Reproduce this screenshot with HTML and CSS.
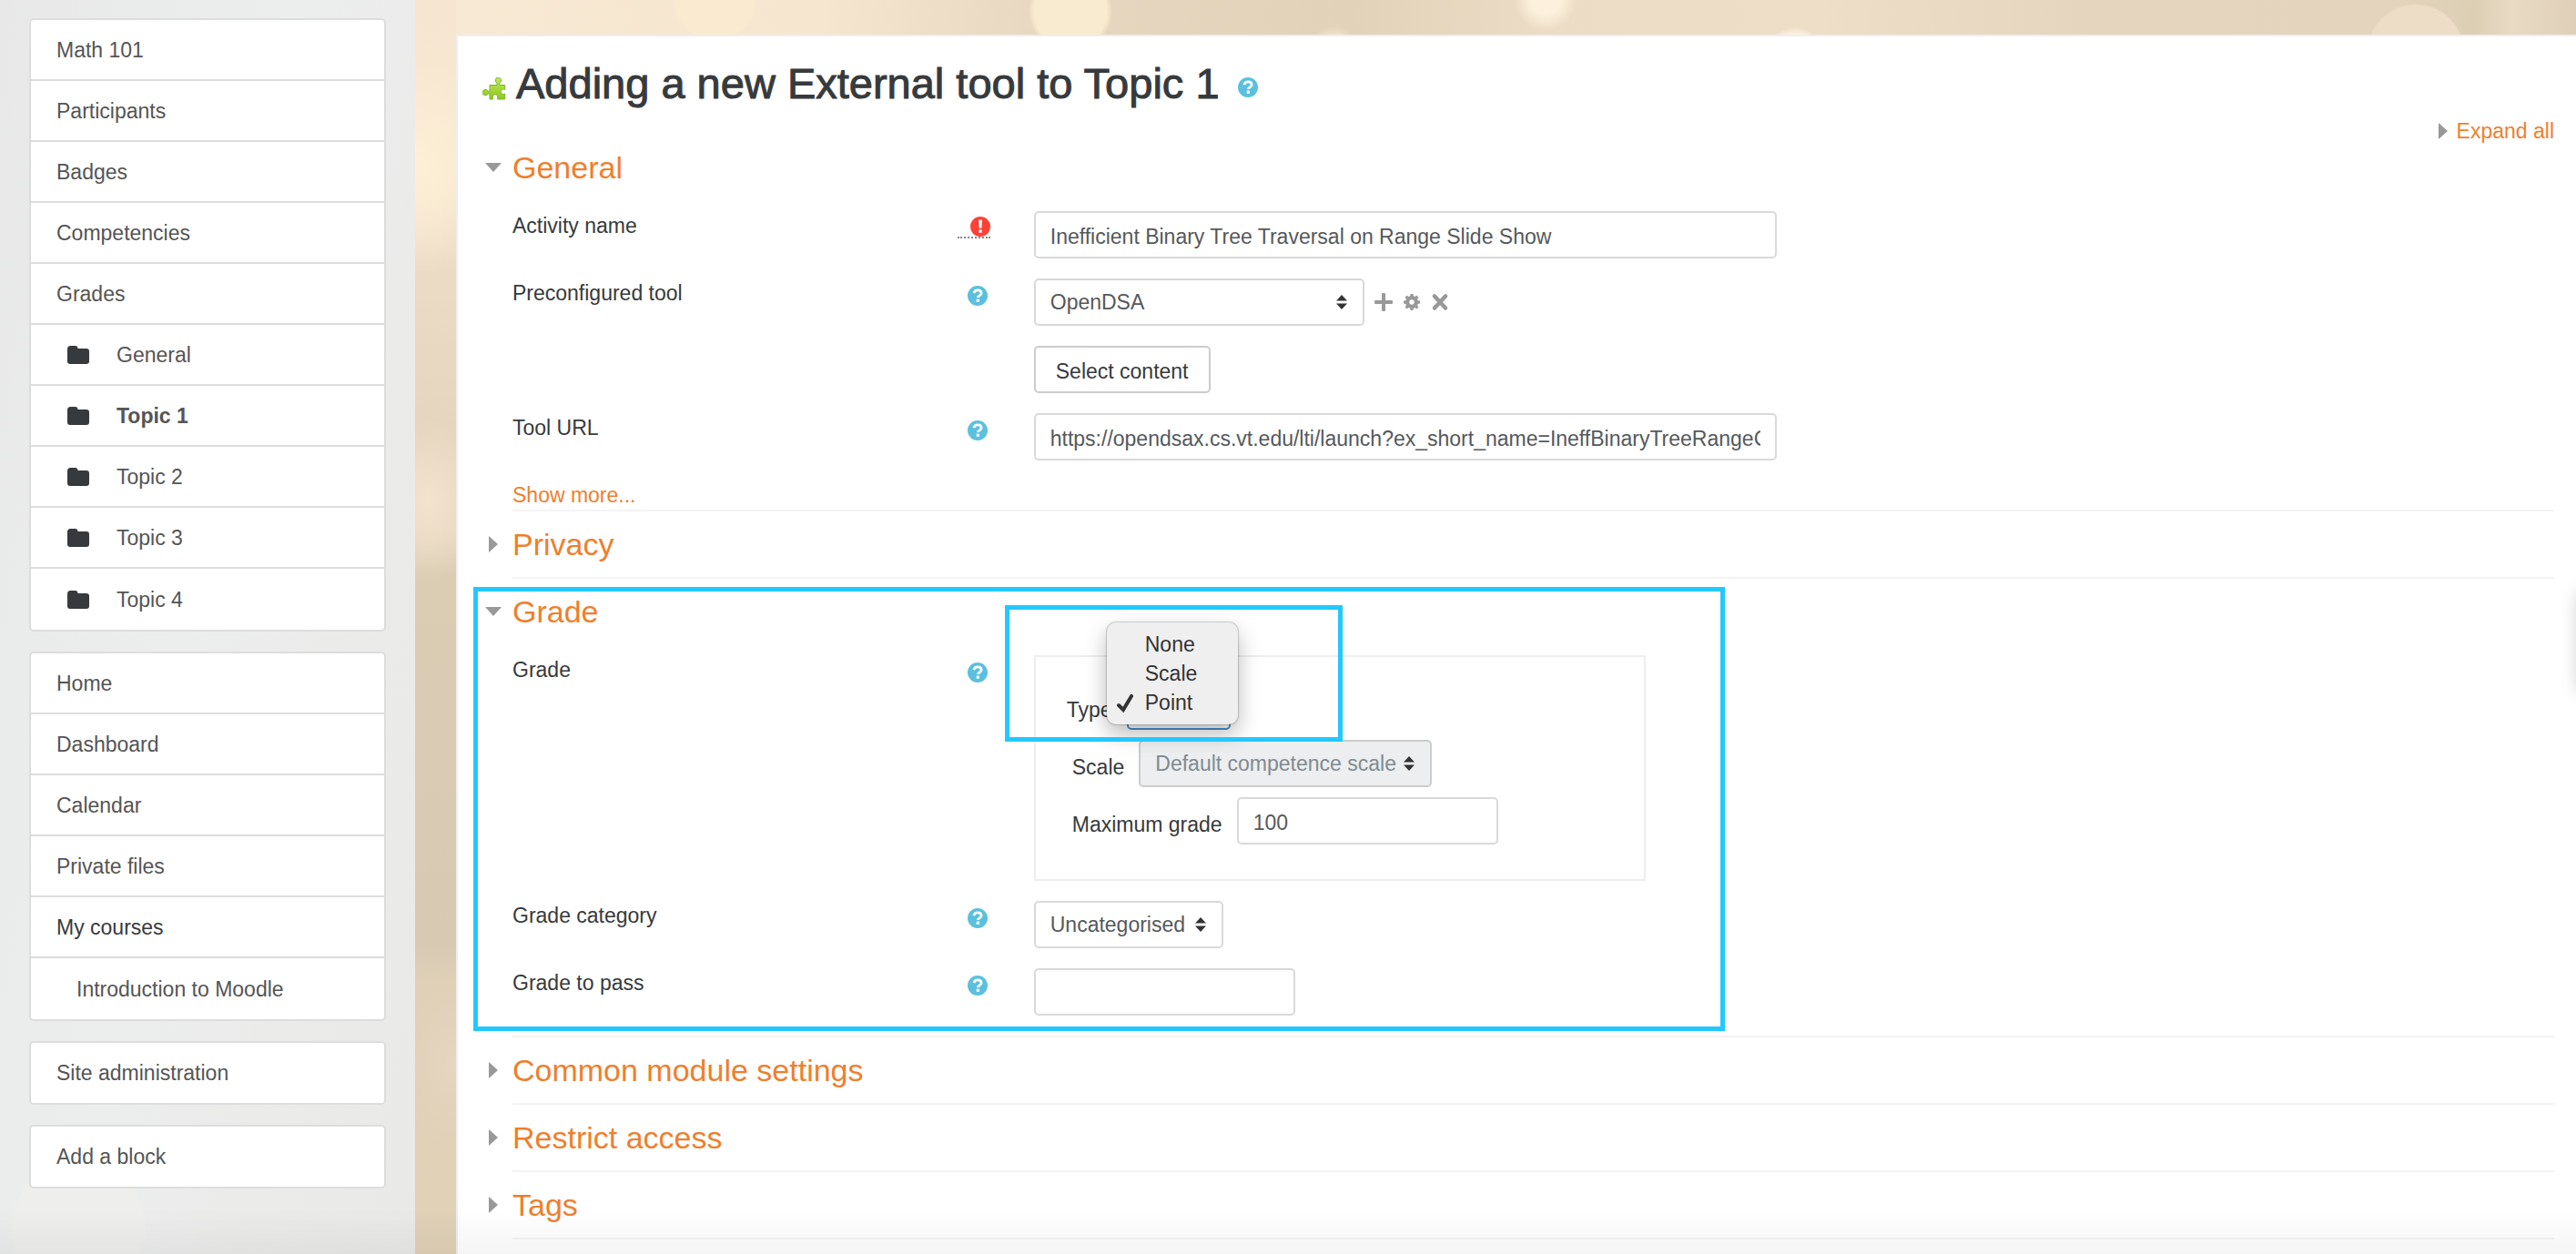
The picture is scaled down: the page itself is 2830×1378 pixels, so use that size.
FILE: index.html
```html
<!DOCTYPE html>
<html lang="en">
<head>
<meta charset="utf-8">
<title>Adding a new External tool to Topic 1</title>
<link rel="stylesheet" href="styles.css">
</head>
<body>
<svg class="sprite" aria-hidden="true">
  <symbol id="folder" viewBox="0 0 24 20"><path d="M3.500 0h5a3 3 0 0 1 3 3h9.500a3 3 0 0 1 3 3v11a3 3 0 0 1-3 3H3a3 3 0 0 1-3-3V3.500A3.500 3.500 0 0 1 3.500 0z"/></symbol>
  <symbol id="help" viewBox="0 0 22 22"><circle cx="11" cy="11" r="11"/><path d="M6.800 8.200C7.500 5.800 9 4.900 11.200 4.900c2.300 0 3.900 1.400 3.900 3.300 0 2.700-3.700 2.700-3.700 4.900" fill="none" stroke="#fff" stroke-width="2.800"/><path d="M9.700 14.600h3.300v3.200H9.700z" fill="#fff"/></symbol>
  <symbol id="required" viewBox="0 0 22 22"><circle cx="11" cy="11" r="11"/><path d="M9.200 3.600h3.600l-.4 9.200H9.600zM9.400 14.600h3.200v3.200H9.400z" fill="#fff"/></symbol>
  <symbol id="down" viewBox="0 0 18 10"><path d="M0 0h18L9 10z"/></symbol>
  <symbol id="right" viewBox="0 0 10 18"><path d="M0 0l10 9-10 9z"/></symbol>
  <symbol id="updown" viewBox="0 0 12 16"><path d="M6 0l6 6.500H0zM6 16l6-6.500H0z"/></symbol>
</svg>
<div class="page">
  <nav class="drawer" aria-label="Navigation">
    <ul class="nav-list nav-course">
      <li><a href="#">Math 101</a></li>
      <li><a href="#">Participants</a></li>
      <li><a href="#">Badges</a></li>
      <li><a href="#">Competencies</a></li>
      <li><a href="#">Grades</a></li>
      <li class="topic"><a href="#"><svg class="folder"><use href="#folder"/></svg>General</a></li>
      <li class="topic current"><a href="#"><svg class="folder"><use href="#folder"/></svg>Topic 1</a></li>
      <li class="topic"><a href="#"><svg class="folder"><use href="#folder"/></svg>Topic 2</a></li>
      <li class="topic"><a href="#"><svg class="folder"><use href="#folder"/></svg>Topic 3</a></li>
      <li class="topic"><a href="#"><svg class="folder"><use href="#folder"/></svg>Topic 4</a></li>
    </ul>
    <ul class="nav-list">
      <li><a href="#">Home</a></li>
      <li><a href="#">Dashboard</a></li>
      <li><a href="#">Calendar</a></li>
      <li><a href="#">Private files</a></li>
      <li class="plain"><span>My courses</span></li>
      <li class="nested"><a href="#">Introduction to Moodle</a></li>
    </ul>
    <ul class="nav-list">
      <li><a href="#">Site administration</a></li>
    </ul>
    <ul class="nav-list">
      <li><a href="#">Add a block</a></li>
    </ul>
  </nav>

  <div class="content">
    <main class="card">
      <header class="title">
        <svg class="puzzle" viewBox="0 0 26 26">
          <defs><linearGradient id="leaf" x1="0" y1="0" x2="0" y2="1"><stop offset="0" stop-color="#c3e85a"/><stop offset="1" stop-color="#8cc81e"/></linearGradient></defs>
          <path d="M8 8.500H16V6.200A3.200 3.200 0 1 1 18.800 6.200V8.500H24.700V13.500A2.800 2.800 0 1 0 24.700 18V24H16.500V22.500A2.700 2.700 0 1 0 11.500 22.500V24H8V18H6.200A3.200 3.200 0 1 1 6.200 15.200H8Z" fill="url(#leaf)" stroke="#7db52f"/>
        </svg>
        <h1>Adding a new External tool to Topic 1</h1>
        <svg class="icon help"><use href="#help"/></svg>
      </header>

      <form>
        <a class="expand" href="#"><svg class="caret side"><use href="#right"/></svg>Expand all</a>

        <section class="group">
          <h2><svg class="caret"><use href="#down"/></svg><a href="#">General</a></h2>
          <div class="rows">
            <div class="row">
              <div class="label"><label for="name">Activity name</label><span class="req"><svg class="icon required"><use href="#required"/></svg></span></div>
              <div class="field"><input class="box wide" id="name" type="text" value="Inefficient Binary Tree Traversal on Range Slide Show"></div>
            </div>
            <div class="row">
              <div class="label"><label for="tool">Preconfigured tool</label><svg class="icon help"><use href="#help"/></svg></div>
              <div class="field">
                <span class="select tool"><select class="box" id="tool"><option>OpenDSA</option></select><svg class="arrows"><use href="#updown"/></svg></span>
                <span class="actions">
                  <svg viewBox="0 0 20 20"><path d="M9 0h2q1 0 1 1v7h7q1 0 1 1v2q0 1-1 1h-7v7q0 1-1 1H9q-1 0-1-1v-7H1q-1 0-1-1V9q0-1 1-1h7V1q0-1 1-1z"/></svg>
                  <svg viewBox="0 0 20 20"><path fill-rule="evenodd" d="M8.600 1h2.800l.5 2.300 1.500.6 2-1.200 2 2-1.300 2 .6 1.500 2.300.4v2.800l-2.300.5-.6 1.500 1.300 2-2 2-2-1.300-1.500.6-.5 2.300H8.600l-.5-2.300-1.500-.6-2 1.300-2-2 1.300-2-.6-1.500L1 11.400V8.600l2.300-.4.600-1.500-1.300-2 2-2 2 1.200 1.500-.6zM10 7.300a2.700 2.700 0 1 0 0 5.400 2.700 2.700 0 0 0 0-5.400z"/></svg>
                  <svg viewBox="0 0 20 20"><path d="M4 3.500l12 13M16 3.500l-12 13" fill="none" stroke="currentColor" stroke-width="4.500" stroke-linecap="round"/></svg>
                </span>
              </div>
            </div>
            <div class="row">
              <div class="label"></div>
              <div class="field"><button class="box" type="button">Select content</button></div>
            </div>
            <div class="row">
              <div class="label"><label for="url">Tool URL</label><svg class="icon help"><use href="#help"/></svg></div>
              <div class="field"><input class="box wide" id="url" type="text" value="https://opendsax.cs.vt.edu/lti/launch?ex_short_name=IneffBinaryTreeRangeCON&amp;ex_settings=%7B%7D"></div>
            </div>
            <a class="more" href="#">Show more...</a>
          </div>
        </section>

        <section class="group">
          <h2><svg class="caret side"><use href="#right"/></svg><a href="#">Privacy</a></h2>
        </section>

        <section class="group">
          <h2><svg class="caret"><use href="#down"/></svg><a href="#">Grade</a></h2>
          <div class="rows">
            <div class="row">
              <div class="label"><span>Grade</span><svg class="icon help"><use href="#help"/></svg></div>
              <div class="field">
                <div class="grade-box">
                  <div class="pair type">
                    <label for="type">Type</label>
                    <select class="box" id="type"><option>Point</option></select>
                    <ul class="menu" role="listbox" aria-label="Type">
                      <li role="option">None</li>
                      <li role="option">Scale</li>
                      <li role="option" aria-selected="true"><svg class="check" viewBox="0 0 18 20"><path d="M2 12l5 5L16 2"/></svg>Point</li>
                    </ul>
                    <div class="mark mark-type"></div>
                  </div>
                  <div class="pair">
                    <label for="scale">Scale</label>
                    <span class="select scale"><select class="box" id="scale" disabled><option>Default competence scale</option></select><svg class="arrows"><use href="#updown"/></svg></span>
                  </div>
                  <div class="pair">
                    <label for="max">Maximum grade</label>
                    <input class="box short" id="max" type="text" value="100">
                  </div>
                </div>
              </div>
            </div>
            <div class="row">
              <div class="label"><label for="category">Grade category</label><svg class="icon help"><use href="#help"/></svg></div>
              <div class="field"><span class="select category"><select class="box" id="category"><option>Uncategorised</option></select><svg class="arrows"><use href="#updown"/></svg></span></div>
            </div>
            <div class="row">
              <div class="label"><label for="pass">Grade to pass</label><svg class="icon help"><use href="#help"/></svg></div>
              <div class="field"><input class="box short" id="pass" type="text"></div>
            </div>
          </div>
          <div class="mark mark-grade"></div>
        </section>

        <section class="group">
          <h2><svg class="caret side"><use href="#right"/></svg><a href="#">Common module settings</a></h2>
        </section>
        <section class="group">
          <h2><svg class="caret side"><use href="#right"/></svg><a href="#">Restrict access</a></h2>
        </section>
        <section class="group">
          <h2><svg class="caret side"><use href="#right"/></svg><a href="#">Tags</a></h2>
        </section>
      </form>
    </main>
  </div>
</div>
<div class="edge-tab"></div>
<div class="bottom-shade"></div>
</body>
</html>
```
FILE: styles.css
```css
* { box-sizing: border-box; }

body {
  margin: 0;
  height: 100vh;
  overflow: hidden;
  font: 23px/32px "Liberation Sans", Arial, sans-serif;
  color: #373a3c;
  background:
    radial-gradient(circle at 786px 0, #faebd0 0 42px, transparent 46px),
    radial-gradient(circle at 1176px 12px, #f9ebcf 0 40px, transparent 46px),
    radial-gradient(circle at 1466px 56px, #f8e8d0 0 12px, transparent 28px),
    radial-gradient(circle at 1698px 0, #fdf0dc 0 16px, transparent 34px),
    radial-gradient(circle at 1972px 66px, #fdf3e4 0 28px, transparent 36px),
    radial-gradient(circle at 2654px 58px, #eddcc6 0 52px, transparent 54px),
    radial-gradient(ellipse 80px 120px at 460px 180px, #fdeed6, transparent),
    radial-gradient(ellipse 70px 90px at 470px 550px, #f3e3ce, transparent),
    radial-gradient(ellipse 60px 90px at 500px 1170px, #e6d5c0, transparent),
    linear-gradient(90deg, transparent 501px, #f8e9d4 501px, #f6e6cf 900px, #e7d7c0 1150px, #e2d2ba 1480px, #ecdcc5 1700px, #eedec7 2000px, #e5d5be 2300px, #e4d4bd 2620px, #dccfb4 2720px, #e9dac4 2760px, #dfcfb8) 0 0 / 100% 60px no-repeat,
    linear-gradient(#f6e5d0 0, #f9e9d2 200px, #ecdcc6 290px, #e5d4be 480px, #e6d6bf 580px, #dacdb3 630px, #d9cab4 900px, #d8c9b3 1040px, #dfd0b7 1080px, #e0d1b7 1378px);
}

a { color: inherit; text-decoration: none; }
ul { list-style: none; margin: 0; padding: 0; }
svg { display: block; flex: none; fill: currentColor; }
.sprite { display: none; }

.page { display: flex; align-items: stretch; min-height: 100%; }

/* Navigation drawer */
.drawer {
  flex: none;
  width: 456px;
  padding: 20px 32px;
  display: flex;
  flex-direction: column;
  gap: 22px;
  background:
    radial-gradient(circle at 86px 1350px, #eeeeec 0 72px, transparent 75px),
    linear-gradient(100deg, #e8e8e8, #eceeee 45%, #ebebea 70%, #e9e9e8);
}
.nav-list { border: 2px solid #ddd; border-radius: 5px; background: #fff; overflow: hidden; }
.nav-list li { height: 67px; display: flex; align-items: center; padding: 0 28px; color: #555; border-bottom: 2px solid #ddd; }
.nav-list li:last-child { border-bottom: 0; }
.nav-list li:only-child { height: 66px; }
.nav-list a { display: flex; align-items: center; }
.nav-list .topic { padding-left: 40px; }
.nav-list .current { font-weight: bold; }
.nav-list .plain { color: #373a3c; }
.nav-list .nested { padding-left: 50px; }
.folder { width: 24px; height: 20px; margin-right: 30px; color: #373a3c; }

/* Main card */
.content { flex: 1; min-width: 0; padding: 38px 0 0 45px; }
.card { border: 2px solid #eee; border-width: 2px 0 0 2px; background: #fff; padding: 24px 24px 40px 60px; min-height: 100%; }

.title { display: flex; align-items: center; margin-left: -33px; }
.title h1 { margin: 0 20px 0 11px; font-size: 47px; line-height: 56px; font-weight: normal; -webkit-text-stroke: 1px; }
.title .help { margin-top: 8px; }
.puzzle { width: 26px; height: 26px; margin-top: 12px; }

.icon { width: 22px; height: 22px; }
.help { color: #5bc0de; }
.required { color: #ff4136; }

.expand { display: flex; align-items: center; justify-content: flex-end; gap: 10px; margin: 8px 0 -12px; color: #ee7f2d; position: relative; }

.group { position: relative; border-bottom: 2px solid #f3f3f3; }
.group h2 { margin: 0 0 0 -30px; display: flex; align-items: center; font-size: 34px; line-height: 72px; font-weight: normal; color: #ee7f2d; }
.caret { width: 18px; height: 10px; color: #999; }
.caret.side { width: 10px; height: 18px; }
h2 .caret { margin-right: 12px; }
h2 .caret.side { margin: 0 16px 0 4px; }
.rows { padding-top: 12px; display: flex; flex-direction: column; gap: 22px; }
.rows:has(.grade-box) { padding-bottom: 22px; }
.row { display: grid; grid-template-columns: minmax(0, 1fr) minmax(0, 3fr); column-gap: 16px; }
.label { display: flex; justify-content: space-between; align-items: flex-start; padding-right: 35px; }
.label .help { margin-top: 8px; }
.req { border-bottom: 2px dotted #888; padding: 6px 0 0 14px; margin-right: -3px; }
.field { display: flex; align-items: center; }
.more { color: #ee7f2d; align-self: flex-start; }

/* Controls */
.box {
  height: 52px;
  margin: 0;
  padding: 0 16px;
  border: 2px solid #d9d9d9;
  border-radius: 5px;
  background: #fff;
  color: #55595c;
  font: inherit;
  appearance: none;
}
input.box { padding-top: 4px; }
button.box { padding: 4px 22px 0; border-color: #ccc; color: #373a3c; }
.wide { width: 816px; }
.short { width: 287px; }
.select { position: relative; display: block; }
.select .box { width: 100%; display: block; }
.arrows { position: absolute; right: 19px; top: 18px; width: 12px; height: 16px; color: #333; pointer-events: none; }
.tool { width: 363px; }
.category { width: 208px; }
.scale { width: 322px; }
.box:disabled { background: #eceeef; border-color: #ccc; color: #818a91; opacity: 1; }
.actions { display: flex; gap: 11px; padding-left: 11px; color: #999; }
.actions svg { width: 20px; height: 20px; }

.grade-box { width: 672px; padding: 28px 40px 38px; border: 2px solid #eee; display: flex; flex-direction: column; gap: 11px; }
.pair { display: flex; align-items: flex-end; gap: 16px; }
.pair label { padding-bottom: 6px; }
.type { position: relative; margin-left: -6px; }
.type .box { width: 114px; border-color: #4a90c8; }

/* Open list of the Type select */
.menu {
  position: absolute;
  z-index: 2;
  left: 44px;
  top: -66px;
  width: 144px;
  padding: 8px 0;
  border-radius: 10px;
  background: #efefef;
  color: #333;
  box-shadow: 0 0 1px 1px rgba(0, 0, 0, .18), 0 10px 24px rgba(0, 0, 0, .28);
}
.menu li { padding-left: 42px; position: relative; }
.check { position: absolute; left: 11px; top: 7px; width: 18px; height: 20px; fill: none; stroke: #333; stroke-width: 4; stroke-linecap: round; }

.mark { position: absolute; z-index: 3; border: 5px solid #22c8ff; pointer-events: none; }
.mark-grade { left: -43px; top: 9px; bottom: 5px; width: 1375px; }
.mark-type { left: -68px; top: -85px; width: 371px; height: 150px; }

/* Shading at the window edges */
.edge-tab { position: fixed; right: -42px; top: 650px; width: 40px; height: 110px; box-shadow: 0 0 20px rgba(0, 0, 0, .2); }
.bottom-shade { position: fixed; left: 0; right: 0; bottom: 0; height: 50px; background: linear-gradient(transparent, rgba(0, 0, 0, .04)); pointer-events: none; }
```
